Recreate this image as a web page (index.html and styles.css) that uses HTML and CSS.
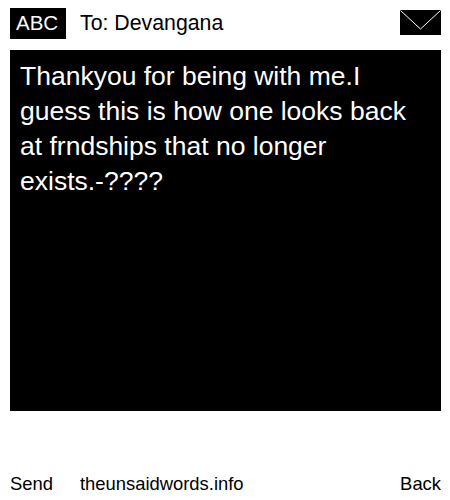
FILE: index.html
```html
<!DOCTYPE html>
<html lang="en">

<head>
    <meta charset="UTF-8">
    <title>theunsaidwords.info</title>
    <link rel="stylesheet" href="styles.css">
</head>

<body>
    <div class="header">
        <span class="mode">ABC</span>
        <span class="to">To: Devangana</span>
        <svg class="envelope" width="41" height="25" viewBox="0 0 41 25">
            <rect width="41" height="25" fill="#000" />
            <path d="M0.5 0.5 L20.5 19 L40.5 0.5" fill="none" stroke="#fff" stroke-width="1" />
        </svg>
    </div>

    <div class="message">Thankyou for being with me.I guess this is how one looks back at frndships that no longer exists.-????</div>

    <div class="footer">
        <a href="#" class="send">Send</a>
        <a href="#" class="site">theunsaidwords.info</a>
        <a href="#" class="back">Back</a>
    </div>
</body>

</html>
```

FILE: styles.css
```css
html,
body {
    height: 100%;
}

body {
    margin: 0;
    padding: 8px 9px 5px 10px;
    box-sizing: border-box;
    display: flex;
    flex-direction: column;
    background-color: #fff;
    color: #000;
    font-family: "Liberation Sans", Arial, sans-serif;
}

/* top bar */
.header {
    display: flex;
    align-items: center;
    height: 31px;
    font-size: 20.5px;
}

.mode {
    width: 56px;
    height: 31px;
    box-sizing: border-box;
    padding-left: 6px;
    line-height: 29px;
    background-color: #000;
    color: #fff;
}

.to {
    margin-left: 14px;
    flex: 1;
    font-size: 21.3px;
}

.envelope {
    align-self: flex-start;
    margin-top: 2px;
}

/* message box */
.message {
    margin-top: 11px;
    height: 361px;
    box-sizing: border-box;
    padding: 9px 10px;
    background-color: #000;
    color: #fff;
    font-size: 26.5px;
    line-height: 35px;
}

/* bottom links */
.footer {
    display: flex;
    margin-top: auto;
    font-size: 18.4px;
}

.footer a {
    color: #000;
    text-decoration: none;
}

.site {
    margin-left: 27px;
    flex: 1;
}
```
